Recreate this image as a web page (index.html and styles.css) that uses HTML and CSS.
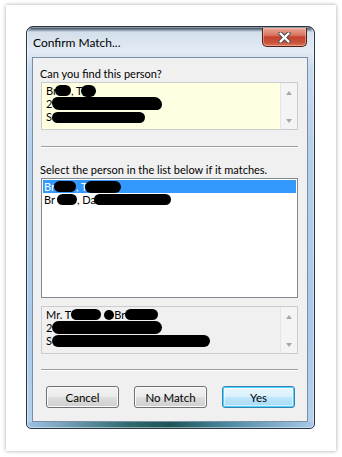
FILE: index.html
```html
<!DOCTYPE html>
<html>
<head>
<meta charset="utf-8">
<link rel="stylesheet" href="styles.css">
</head>
<body>
<div class="page">
  <div class="card">
    <div class="window">
      <div class="titlebar">
        <span class="title">Confirm Match...</span>
        <div class="close">
          <svg width="13" height="11" viewBox="0 0 13 11">
            <path d="M2.5 1.5 L10.5 9.5 M10.5 1.5 L2.5 9.5" stroke="#4a4a4a" stroke-width="4.2" stroke-linecap="round"/>
            <path d="M2.5 1.5 L10.5 9.5 M10.5 1.5 L2.5 9.5" stroke="#ffffff" stroke-width="2.4" stroke-linecap="round"/>
          </svg>
        </div>
      </div>
      <div class="client">
        <div class="label first">Can you find this person?</div>
        <div class="box yellow">
          <div class="lines">
            <div class="line">Br<span class="blob b1"></span>, T<span class="blob b2"></span></div>
            <div class="line">2<span class="blob b3"></span></div>
            <div class="line">S<span class="blob b4"></span></div>
          </div>
          <div class="vscroll"><span class="arr up"></span><span class="arr down"></span></div>
        </div>
        <div class="sep sep1"></div>
        <div class="label second">Select the person in the list below if it matches.</div>
        <div class="listbox">
          <div class="item selected">Br<span class="blob b5"></span>, T<span class="blob b6"></span></div>
          <div class="item">Br<span class="blob b7"></span>, Da<span class="blob b8"></span></div>
        </div>
        <div class="box grey">
          <div class="lines">
            <div class="line">Mr. T<span class="blob b9"></span><span class="blob b10"></span>Br<span class="blob b11"></span></div>
            <div class="line">2<span class="blob b12"></span></div>
            <div class="line">S<span class="blob b13"></span></div>
          </div>
          <div class="vscroll"><span class="arr up"></span><span class="arr down"></span></div>
        </div>
        <div class="sep sep2"></div>
        <div class="buttons">
          <div class="btn">Cancel</div>
          <div class="btn">No Match</div>
          <div class="btn default">Yes</div>
        </div>
      </div>
    </div>
  </div>
</div>
</body>
</html>
```

FILE: styles.css
```css
* { box-sizing: border-box; }
html, body { margin: 0; padding: 0; background: #ffffff; }
body { width: 342px; height: 457px; overflow: hidden; font-family: Lato, "Noto Sans", sans-serif; font-size: 11px; color: #000; }

.page { padding: 5px 6px 6px 6px; }

.card {
  width: 330px;
  height: 446px;
  background: #ffffff;
  box-shadow: 0 0 4px rgba(0,0,0,0.35);
  padding: 21px 0 0 20px;
}

.window {
  width: 289px;
  height: 403px;
  border: 1px solid #2a3644;
  border-radius: 7px 7px 5px 5px;
  display: flex;
  flex-direction: column;
  background:
    linear-gradient(to right, #9fc1e6 0%, #2f6b6e 35%, #1d5458 50%, #4c8aa0 70%, #a8c8ea 100%) bottom / 100% 6px no-repeat,
    linear-gradient(to bottom, #27323d 0px, #5e7285 2px, #d3dfeb 5px, #e3ebf4 24px, #c8dbee 40px, #b6d0ea 120px, #aac8ea 300px, #b6d1ec 100%);
  box-shadow: inset 0 0 0 1px rgba(255,255,255,0.45);
  overflow: hidden;
}

.titlebar {
  height: 30px;
  display: flex;
  justify-content: space-between;
  align-items: flex-start;
  padding-left: 6px;
}

.title {
  margin-top: 8px;
  font-size: 12px;
  line-height: 15px;
  color: #000;
}

.close {
  width: 45px;
  height: 19px;
  margin-top: 1px;
  margin-right: 7px;
  border: 1px solid #4f1e16;
  border-top: none;
  border-radius: 0 0 5px 5px;
  background: linear-gradient(to bottom, #e9a797 0%, #d97461 40%, #c5432f 50%, #c8533a 80%, #d9775b 100%);
  box-shadow: inset 0 0 0 1px rgba(255,210,200,0.45);
  display: flex;
  align-items: center;
  justify-content: center;
}

.client {
  flex: 1;
  margin: 0 6px 6px 5px;
  border: 1px solid #7b8ea5;
  background: #f0f0f0;
  padding-left: 7px;
  display: flex;
  flex-direction: column;
}

.label {
  font-size: 11px;
  line-height: 15px;
  white-space: nowrap;
}
.label.first { margin-top: 8px; }
.label.second { margin-top: 14px; }

.box {
  margin-top: 1px;
  margin-left: 1px;
  width: 257px;
  height: 48px;
  border: 1px solid #c9cdd2;
  display: flex;
  flex-shrink: 0;
}
.box.yellow { background: #ffffe1; margin-top: 1px; }
.box.grey { background: #f0f0f0; margin-top: 8px; }

.lines {
  flex: 1;
  padding: 1px 0 0 4px;
  overflow: hidden;
}
.line, .item {
  height: 13px;
  line-height: 13px;
  font-size: 11px;
  white-space: nowrap;
  display: flex;
  align-items: center;
}

.vscroll {
  width: 17px;
  border-left: 1px solid #e6e6e6;
  background: #f4f4f4;
  display: flex;
  flex-direction: column;
  justify-content: space-between;
  align-items: center;
  padding: 8px 0 6px 0;
}
.arr { width: 0; height: 0; border-left: 3.5px solid transparent; border-right: 3.5px solid transparent; }
.arr.up { border-bottom: 4px solid #a8a8a8; }
.arr.down { border-top: 4px solid #a8a8a8; }

.sep {
  margin-left: 1px;
  width: 257px;
  height: 2px;
  border-top: 1px solid #a0a0a0;
  border-bottom: 1px solid #ffffff;
  flex-shrink: 0;
}
.sep1 { margin-top: 16px; }
.sep2 { margin-top: 15px; }

.listbox {
  margin-top: 1px;
  margin-left: 1px;
  width: 257px;
  height: 120px;
  border: 1px solid #828790;
  background: #ffffff;
  padding: 1px;
  flex-shrink: 0;
}
.item { padding-left: 1px; }
.item.selected { background: #3399ff; color: #ffffff; }

.blob {
  display: inline-block;
  background: #000;
  border-radius: 7px;
  height: 11px;
  flex-shrink: 0;
}
.b1 { width: 16px; margin-left: -2px; }
.b2 { width: 15px; height: 12px; margin-left: -1px; }
.b3 { width: 110px; height: 13px; margin-left: 0; border-radius: 7px 10px 7px 9px; }
.b4 { width: 93px; height: 11px; margin-top: 2px; }
.b5 { width: 22px; margin-left: -1px; }
.b6 { width: 36px; height: 12px; margin-left: -2px; }
.b7 { width: 20px; margin-left: 2px; }
.b8 { width: 77px; margin-left: -2px; }
.b9 { width: 30px; }
.b10 { width: 10px; height: 10px; margin-left: 3px; border-radius: 50%; }
.b11 { width: 33px; }
.b12 { width: 110px; height: 13px; }
.b13 { width: 158px; height: 12px; }

.buttons {
  margin-top: 15px;
  margin-left: 6px;
  display: flex;
  gap: 15px;
}
.btn {
  width: 73px;
  height: 22px;
  border: 1px solid #707070;
  border-radius: 3px;
  background: linear-gradient(to bottom, #f2f2f2 0%, #ebebeb 48%, #dddddd 52%, #cfcfcf 100%);
  box-shadow: inset 0 0 0 1px #fbfbfb;
  font-size: 11.5px;
  display: flex;
  align-items: center;
  justify-content: center;
  color: #000;
}
.btn.default {
  border-color: #3c7fb1;
  background: linear-gradient(to bottom, #eaf6fd 0%, #d9f0fc 48%, #bee6fd 52%, #a7d9f5 100%);
  box-shadow: inset 0 0 0 1px #48d6ff, inset 0 0 0 2px rgba(255,255,255,0.5);
}
```
